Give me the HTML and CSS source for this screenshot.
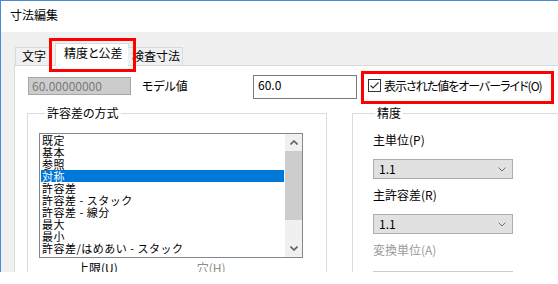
FILE: index.html
```html
<!DOCTYPE html>
<html lang="ja">
<head>
<meta charset="utf-8">
<title>寸法編集</title>
<link rel="stylesheet" href="styles.css">
</head>
<body>
<div class="window">
  <div class="titlebar">寸法編集</div>
  <div class="client">
    <div class="tabs">
      <div class="tab tab-text">文字</div>
      <div class="tab tab-active">精度と公差</div>
      <div class="tab tab-check">検査寸法</div>
    </div>
    <div class="panel">
      <div class="row1">
        <div class="box-disabled">60.00000000</div>
        <div class="lbl-model">モデル値</div>
        <div class="box-input">60.0</div>
        <div class="check">
          <svg width="13" height="13" viewBox="0 0 13 13"><rect x="0.5" y="0.5" width="12" height="12" fill="#fff" stroke="#333"/><path d="M2.5 6.5 L5 9 L10.5 3.5" fill="none" stroke="#333" stroke-width="1.2"/></svg>
        </div>
        <div class="lbl-check">表示された値をオーバーライド(O)</div>
      </div>
      <div class="row2">
        <fieldset class="group group-method">
          <legend class="legend legend-method">許容差の方式</legend>
          <div class="listbox">
            <ul class="items">
              <li>既定</li>
              <li>基本</li>
              <li>参照</li>
              <li class="sel">対称</li>
              <li>許容差</li>
              <li>許容差 - スタック</li>
              <li>許容差 - 線分</li>
              <li>最大</li>
              <li>最小</li>
              <li>許容差/はめあい - スタック</li>
            </ul>
            <div class="scrollbar">
              <div class="sb-btn">
                <svg width="8" height="5" viewBox="0 0 8 5"><path d="M0.5 4.5 L4 1 L7.5 4.5" fill="none" stroke="#606060" stroke-width="1.6"/></svg>
              </div>
              <div class="sb-thumb"></div>
              <div class="sb-track"></div>
              <div class="sb-btn">
                <svg width="8" height="5" viewBox="0 0 8 5"><path d="M0.5 0.5 L4 4 L7.5 0.5" fill="none" stroke="#606060" stroke-width="1.6"/></svg>
              </div>
            </div>
          </div>
          <div class="limits">
            <span class="lim-upper">上限(U)</span>
            <span class="lim-hole">穴(H)</span>
          </div>
        </fieldset>
        <fieldset class="group group-prec">
          <legend class="legend legend-prec">精度</legend>
          <div class="field-lbl lbl-first">主単位(P)</div>
          <div class="combo"><span>1.1</span><svg width="8" height="5" viewBox="0 0 8 5"><path d="M0.5 0.5 L4 4 L7.5 0.5" fill="none" stroke="#707070" stroke-width="1"/></svg></div>
          <div class="field-lbl">主許容差(R)</div>
          <div class="combo"><span>1.1</span><svg width="8" height="5" viewBox="0 0 8 5"><path d="M0.5 0.5 L4 4 L7.5 0.5" fill="none" stroke="#707070" stroke-width="1"/></svg></div>
          <div class="field-lbl disabled">変換単位(A)</div>
          <div class="combo combo-disabled"></div>
        </fieldset>
      </div>
    </div>
  </div>
  <div class="mark mark-tab"></div>
  <div class="mark mark-check"></div>
</div>
</body>
</html>
```

FILE: styles.css
```css
* { box-sizing: border-box; }
html, body { margin: 0; padding: 0; background: #fff; }
body {
  font-family: "Noto Sans CJK JP", "Noto Sans", sans-serif;
  font-size: 12px;
  color: #000;
  font-feature-settings: "palt";
}
.window {
  position: relative;
  width: 558px;
  height: 272px;
  overflow: hidden;
  border-left: 1px solid #4a8ad0;
  border-top: 1px solid #4a8ad0;
  display: flex;
  flex-direction: column;
  background: #fff;
}
.titlebar {
  height: 31px;
  flex: none;
  display: flex;
  align-items: center;
  padding: 0 0 3px 9px;
  line-height: 14px;
  background: #fff;
}
.client {
  flex: 1;
  background: #f0f0f0;
  padding: 11px 0 0 13px;
  display: flex;
  flex-direction: column;
}
.tabs {
  display: flex;
  align-items: flex-end;
  height: 22px;
  padding-left: 1px;
  position: relative;
  z-index: 1;
}
.tab {
  border: 1px solid #d9d9d9;
  border-bottom: none;
  background: #f0f0f0;
  height: 18px;
  line-height: 16px;
  padding-left: 6px;
  flex: none;
}
.tab-text { width: 37px; }
.tab-active {
  margin-left: 3px;
  width: 74px;
  height: 23px;
  margin-bottom: -1px;
  background: #fff;
  padding-left: 8px;
  line-height: 18px;
}
.tab-check {
  width: 55px;
  margin-left: -1px;
  padding-left: 4px;
  border-left: none;
}
.panel {
  flex: 1;
  background: #fff;
  border: 1px solid #d9d9d9;
  border-right: none;
  border-bottom: none;
  padding: 9px 0 0 13px;
  min-width: 0;
}
.row1 {
  display: flex;
  align-items: center;
  height: 24px;
}
.row1 > * { flex: none; }
.box-disabled {
  width: 103px;
  height: 18px;
  margin-bottom: 3px;
  background: #cccccc;
  border: 1px solid #a6a6a6;
  color: #7a7a7a;
  padding-left: 3px;
  line-height: 16px;
  font-feature-settings: normal;
}
.lbl-model {
  width: 111px;
  margin-left: 11px;
  margin-bottom: 3px;
  line-height: 14px;
}
.box-input {
  width: 104px;
  height: 24px;
  border: 1px solid #7a7a7a;
  padding-left: 4px;
  line-height: 18px;
}
.check {
  margin-left: 11px;
  width: 13px;
  height: 13px;
  margin-bottom: 3px;
}
.check svg { display: block; }
.lbl-check {
  margin-left: 3px;
  margin-bottom: 3px;
  line-height: 14px;
  white-space: nowrap;
  letter-spacing: -1px;
}
.row2 {
  display: flex;
  align-items: flex-start;
  margin-top: 7px;
}
.group {
  margin: 0;
  padding: 0;
  border: 1px solid #dcdcdc;
  min-width: 0;
  height: 200px;
  flex: none;
}
.legend {
  line-height: 14px;
  padding: 0 2px;
}
.group-method {
  width: 300px;
  margin-left: -1px;
  padding: 13px 0 0 11px;
}
.legend-method { margin-left: 6px; }
.group-prec {
  width: 260px;
  margin-left: 25px;
  padding: 12px 0 0 20px;
}
.legend-prec { margin-left: 2px; }
.listbox {
  width: 264px;
  height: 125px;
  border: 1px solid #828790;
  display: flex;
  background: #fff;
}
.items {
  list-style: none;
  margin: 0;
  padding: 0 0 0 1px;
  flex: 1;
  overflow: hidden;
  font-feature-settings: normal;
  font-size: 11px;
}
.items li {
  height: 12px;
  line-height: 12px;
  padding-left: 1px;
  white-space: nowrap;
  margin-right: 1px;
  letter-spacing: 0.5px;
}
.items li.sel {
  background: #0078d7;
  color: #fff;
}
.scrollbar {
  width: 17px;
  flex: none;
  display: flex;
  flex-direction: column;
  background: #f0f0f0;
}
.sb-btn {
  height: 17px;
  display: flex;
  align-items: center;
  justify-content: center;
  flex: none;
}
.sb-thumb {
  height: 69px;
  background: #cdcdcd;
  flex: none;
}
.sb-track { flex: 1; }
.limits {
  display: flex;
  margin-top: 3px;
  line-height: 14px;
}
.lim-upper { margin-left: 38px; }
.lim-hole { margin-left: 79px; color: #8c8c8c; }
.field-lbl {
  line-height: 16px;
  margin-top: 8px;
}
.field-lbl.lbl-first { margin-top: 0; }
.field-lbl.disabled { color: #9a9a9a; }
.combo {
  width: 140px;
  height: 20px;
  margin-top: 11px;
  background: #e1e1e1;
  border: 1px solid #adadad;
  display: flex;
  align-items: center;
  justify-content: space-between;
  padding: 0 6px 0 5px;
  line-height: 16px;
}
.combo svg { display: block; }
.combo-disabled {
  margin-top: 13px;
  background: #f0f0f0;
  border-color: #cccccc;
}
.mark {
  position: absolute;
  border: 3px solid #ff0000;
  pointer-events: none;
  z-index: 5;
}
.mark-tab { left: 48px; top: 37px; width: 87px; height: 34px; }
.mark-check { left: 360px; top: 70px; width: 193px; height: 33px; }
```
